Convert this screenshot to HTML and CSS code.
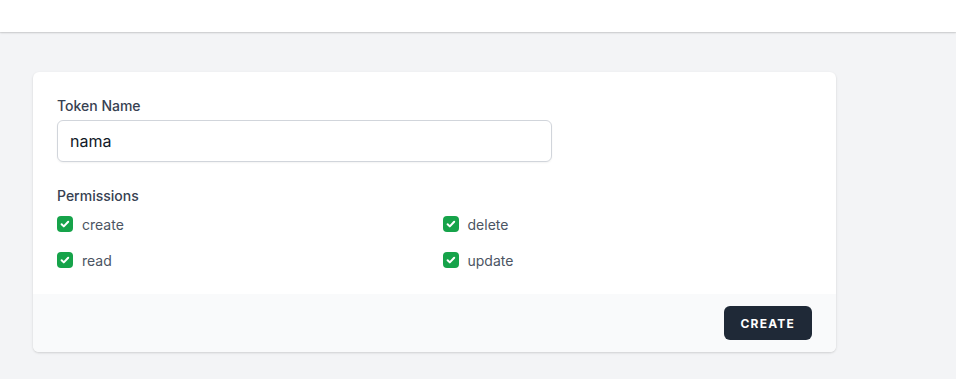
FILE: index.html
```html
<!DOCTYPE html>
<html>
<head>
<meta charset="utf-8">
<link rel="stylesheet" href="styles.css">
</head>
<body>
<header class="topbar"></header>
<main class="page">
  <section class="card">
    <div class="card-body">
      <label class="label" for="tn">Token Name</label>
      <input class="input" id="tn" type="text" value="nama">
      <div class="label perm-label">Permissions</div>
      <div class="perm-grid">
        <label class="perm"><span class="check"><svg viewBox="0 0 16 16" width="16" height="16"><path d="M4.6 8.2l2.2 2.2 4.4-4.6" fill="none" stroke="#fff" stroke-width="2" stroke-linecap="round" stroke-linejoin="round"/></svg></span><span class="perm-text">create</span></label>
        <label class="perm"><span class="check"><svg viewBox="0 0 16 16" width="16" height="16"><path d="M4.6 8.2l2.2 2.2 4.4-4.6" fill="none" stroke="#fff" stroke-width="2" stroke-linecap="round" stroke-linejoin="round"/></svg></span><span class="perm-text">delete</span></label>
        <label class="perm"><span class="check"><svg viewBox="0 0 16 16" width="16" height="16"><path d="M4.6 8.2l2.2 2.2 4.4-4.6" fill="none" stroke="#fff" stroke-width="2" stroke-linecap="round" stroke-linejoin="round"/></svg></span><span class="perm-text">read</span></label>
        <label class="perm"><span class="check"><svg viewBox="0 0 16 16" width="16" height="16"><path d="M4.6 8.2l2.2 2.2 4.4-4.6" fill="none" stroke="#fff" stroke-width="2" stroke-linecap="round" stroke-linejoin="round"/></svg></span><span class="perm-text">update</span></label>
      </div>
    </div>
    <div class="card-footer">
      <button class="btn" type="button">Create</button>
    </div>
  </section>
</main>
</body>
</html>
```
FILE: styles.css
```css
* { box-sizing: border-box; }
html, body { margin: 0; padding: 0; }
body {
  background: #f3f4f6;
  font-family: Inter, "Noto Sans", sans-serif;
  height: 379px;
  overflow: hidden;
}
.topbar {
  height: 32px;
  background: #fff;
  box-shadow: 0 1px 2px rgba(0,0,0,0.12), 0 1px 1px rgba(0,0,0,0.06);
  position: relative;
}
.page {
  padding: 40px 0 0 33px;
}
.card {
  width: 803px;
  background: #fff;
  border-radius: 6px;
  box-shadow: 0 1px 3px rgba(0,0,0,0.1), 0 1px 2px rgba(0,0,0,0.06);
  overflow: hidden;
}
.card-body {
  padding: 24px 24px 24px;
}
.label {
  display: block;
  font-size: 14px;
  line-height: 20px;
  font-weight: 500;
  color: #374151;
}
.input {
  display: block;
  margin-top: 4px;
  width: 495px;
  height: 42px;
  border: 1px solid #d1d5db;
  border-radius: 6px;
  box-shadow: 0 1px 2px rgba(0,0,0,0.05);
  padding: 0 12px;
  font-family: Inter, "Noto Sans", sans-serif;
  font-size: 16px;
  color: #111827;
  background: #fff;
  outline: none;
}
.perm-label { margin-top: 24px; }
.perm-grid {
  margin-top: 8px;
  display: grid;
  grid-template-columns: 1fr 1fr;
  gap: 16px;
}
.perm {
  display: flex;
  align-items: center;
  height: 20px;
}
.check {
  width: 16px;
  height: 16px;
  border-radius: 4px;
  background: #16a34a;
  display: flex;
}
.perm-text {
  margin-left: 9px;
  font-size: 14px;
  color: #4b5563;
}
.card-footer {
  background: #f9fafb;
  padding: 12px 24px 12px;
  display: flex;
  justify-content: flex-end;
}
.btn {
  height: 34px;
  padding: 0 17px;
  background: #1f2937;
  color: #fff;
  border: none;
  border-radius: 6px;
  font-family: Inter, "Noto Sans", sans-serif;
  font-size: 12px;
  font-weight: 700;
  letter-spacing: 0.1em;
  text-transform: uppercase;
}
```
